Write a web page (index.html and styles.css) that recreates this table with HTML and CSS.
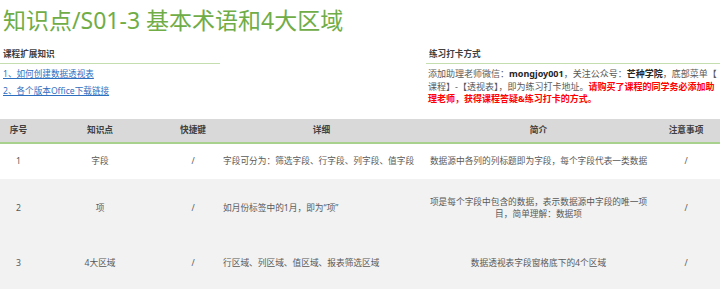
FILE: index.html
```html
<!DOCTYPE html>
<html lang="zh">
<head>
<meta charset="utf-8">
<link rel="stylesheet" href="styles.css">
</head>
<body>
<h1 class="title">知识点/S01-3 基本术语和4大区域</h1>
<div class="info">
  <div class="info-left">
    <div class="sec-head">课程扩展知识</div>
    <div class="links">
      <a class="link" href="#">1、如何创建数据透视表</a>
      <a class="link" href="#">2、各个版本Office下载链接</a>
    </div>
  </div>
  <div class="info-right">
    <div class="sec-head">练习打卡方式</div>
    <p class="note">添加助理老师微信：<b class="strong">mongjoy001</b>，关注公众号：<b class="strong">芒种学院</b>，底部菜单【课程】-【透视表】，即为练习打卡地址。<b class="warn">请购买了课程的同学务必添加助理老师，获得课程答疑&amp;练习打卡的方式。</b></p>
  </div>
</div>
<table class="grid">
  <colgroup>
    <col class="c1"><col class="c2"><col class="c3"><col class="c4"><col class="c5"><col class="c6">
  </colgroup>
  <thead>
    <tr>
      <th>序号</th><th>知识点</th><th>快捷键</th><th>详细</th><th>简介</th><th class="last">注意事项</th>
    </tr>
  </thead>
  <tbody>
    <tr class="r1">
      <td>1</td><td>字段</td><td>/</td><td class="detail">字段可分为：筛选字段、行字段、列字段、值字段</td><td class="brief">数据源中各列的列标题即为字段，每个字段代表一类数据</td><td class="last">/</td>
    </tr>
    <tr class="r2">
      <td>2</td><td>项</td><td>/</td><td class="detail">如月份标签中的1月，即为“项”</td><td class="brief">项是每个字段中包含的数据，表示数据源中字段的唯一项目，简单理解：数据项</td><td class="last">/</td>
    </tr>
    <tr class="r3">
      <td>3</td><td>4大区域</td><td>/</td><td class="detail">行区域、列区域、值区域、报表筛选区域</td><td class="brief">数据透视表字段窗格底下的4个区域</td><td class="last">/</td>
    </tr>
  </tbody>
</table>
</body>
</html>
```
FILE: styles.css
```css
html, body {
  margin: 0;
  padding: 0;
  background: #ffffff;
}
body {
  width: 720px;
  height: 290px;
  overflow: hidden;
  font-family: "Noto Sans", "Noto Sans CJK SC", sans-serif;
  color: #595959;
}
.title {
  margin: 0;
  padding: 5px 0 0 3px;
  font-size: 23px;
  line-height: 30px;
  font-weight: 400;
  color: #70ad47;
}
.info {
  display: flex;
  margin-top: 13px;
  height: 71px;
}
.info-left {
  width: 220px;
  flex: none;
}
.info-right {
  margin-left: 206px;
  width: 296px;
  flex: none;
}
.sec-head {
  font-size: 8.6px;
  line-height: 12px;
  font-weight: 700;
  color: #404040;
  padding: 0 0 3px 3px;
  border-bottom: 1px solid #c5deb0;
}
.links {
  display: flex;
  flex-direction: column;
  padding: 4px 0 0 3px;
  gap: 5px;
}
.link {
  font-size: 8.6px;
  line-height: 12px;
  color: #2f6fc0;
  text-decoration: underline;
}
.note {
  margin: 4px 0 0 0;
  padding-left: 2px;
  font-size: 9px;
  line-height: 12.5px;
  color: #595959;
  line-break: anywhere;
}
.strong {
  color: #262626;
  font-weight: 700;
}
.warn {
  color: #ff0000;
  font-weight: 700;
}
.grid {
  width: 720px;
  border-collapse: collapse;
  table-layout: fixed;
  font-size: 8.7px;
  line-height: 12.5px;
}
.c1 { width: 37px; }
.c2 { width: 126px; }
.c3 { width: 60px; }
.c4 { width: 197px; }
.c5 { width: 237px; }
.c6 { width: 63px; }
.grid th {
  background: #d9d9d9;
  color: #404040;
  font-weight: 700;
  height: 23px;
  padding: 0;
  text-align: center;
  border-bottom: 2px solid #a9d18e;
}
.grid td {
  padding: 0;
  text-align: center;
  color: #595959;
}
.grid .last {
  padding-right: 5px;
}
.grid td.detail {
  text-align: left;
  padding-left: 0;
}
.grid td.brief {
  padding: 0 8px;
}
.r1 td {
  background: #ffffff;
  height: 35px;
}
.r2 td {
  background: #f2f2f2;
  height: 58px;
}
.r3 td {
  background: #f2f2f2;
  height: 52px;
}
```
